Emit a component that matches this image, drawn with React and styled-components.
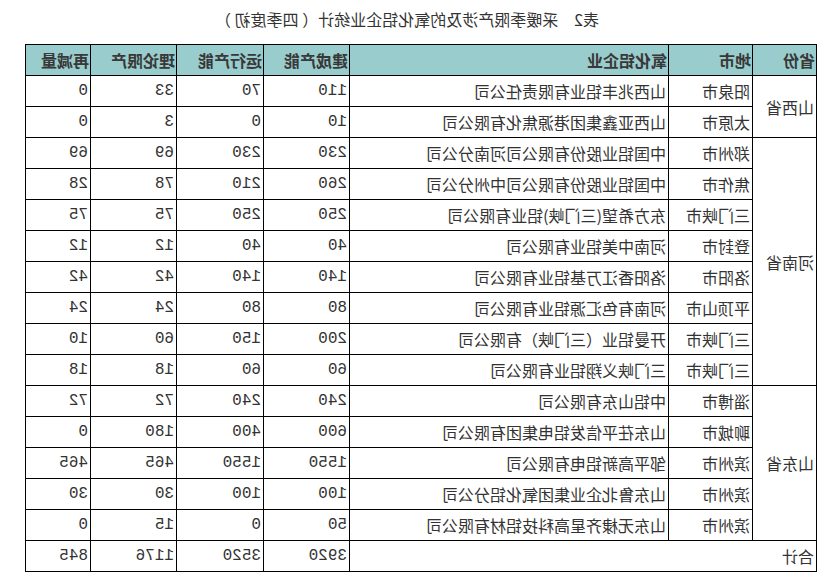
import React from 'react'
import styled, { createGlobalStyle } from 'styled-components'

const GlobalStyle = createGlobalStyle`
body {
  margin: 0;
  background: #fff;
}
`

const Page = styled.div`
width: 836px;
height: 585px;
transform: scaleX(-1);
font-family: "Noto Sans CJK SC", sans-serif;
color: #333;
`

const Title = styled.div`
height: 44px;
display: flex;
align-items: center;
justify-content: center;
font-size: 16px;
padding-left: 22px;
padding-bottom: 6px;
box-sizing: border-box;
color: #333;
`

const Table = styled.table`
margin-left: 19px;
width: 791px;
border-collapse: collapse;
table-layout: fixed;
font-size: 16px;
`

const Row = styled.tr`
height: 31px;
`

const HeadCell = styled.th`
background: #99cccc;
border: 1px solid #000;
text-align: left;
padding: 0 1px;
font-weight: bold;
color: #383838;
white-space: nowrap;
overflow: hidden;
`

const Cell = styled.td`
border: 1px solid #000;
text-align: left;
padding: 0 2px;
white-space: nowrap;
overflow: hidden;
font-family: ${p => (p.$num ? '"Liberation Mono", monospace' : '"Noto Sans CJK SC", sans-serif')};
`

const cols = [64, 84, 319, 86, 87, 86, 65]
const heads = ['省份', '地市', '氧化铝企业', '建成产能', '运行产能', '理论限产', '再减量']

const groups = [
  {
    province: '山西省',
    rows: [
      ['阳泉市', '山西兆丰铝业有限责任公司', 110, 70, 33, 0],
      ['太原市', '山西亚鑫集团港源焦化有限公司', 10, 0, 3, 0],
    ],
  },
  {
    province: '河南省',
    rows: [
      ['郑州市', '中国铝业股份有限公司河南分公司', 230, 230, 69, 69],
      ['焦作市', '中国铝业股份有限公司中州分公司', 260, 210, 78, 28],
      ['三门峡市', '东方希望(三门峡)铝业有限公司', 250, 250, 75, 75],
      ['登封市', '河南中美铝业有限公司', 40, 40, 12, 12],
      ['洛阳市', '洛阳香江万基铝业有限公司', 140, 140, 42, 42],
      ['平顶山市', '河南有色汇源铝业有限公司', 80, 80, 24, 24],
      ['三门峡市', '开曼铝业（三门峡）有限公司', 200, 150, 60, 10],
      ['三门峡市', '三门峡义翔铝业有限公司', 60, 60, 18, 18],
    ],
  },
  {
    province: '山东省',
    rows: [
      ['淄博市', '中铝山东有限公司', 240, 240, 72, 72],
      ['聊城市', '山东茌平信发铝电集团有限公司', 600, 400, 180, 0],
      ['滨州市', '邹平高新铝电有限公司', 1550, 1550, 465, 465],
      ['滨州市', '山东鲁北企业集团氧化铝分公司', 100, 100, 30, 30],
      ['滨州市', '山东无棣齐星高科技铝材有限公司', 50, 0, 15, 0],
    ],
  },
]

const totals = [3920, 3520, 1176, 845]

const App = () => {
  return (
    <Page>
      <GlobalStyle />
      <Title>表2　采暖季限产涉及的氧化铝企业统计（ 四季度初 ）</Title>
      <Table>
        <colgroup>
          {cols.map((w, i) => <col key={i} style={{width: w}} />)}
        </colgroup>
        <thead>
          <Row>
            {heads.map(h => <HeadCell key={h}>{h}</HeadCell>)}
          </Row>
        </thead>
        <tbody>
          {groups.map(g =>
            g.rows.map((r, i) => (
              <Row key={g.province + i}>
                {i === 0 && <Cell rowSpan={g.rows.length}>{g.province}</Cell>}
                <Cell>{r[0]}</Cell>
                <Cell>{r[1]}</Cell>
                {r.slice(2).map((n, j) => <Cell key={j} $num>{n}</Cell>)}
              </Row>
            ))
          )}
          <Row>
            <Cell colSpan={3}>合计</Cell>
            {totals.map((n, j) => <Cell key={j} $num>{n}</Cell>)}
          </Row>
        </tbody>
      </Table>
    </Page>
  )
}

export default App
